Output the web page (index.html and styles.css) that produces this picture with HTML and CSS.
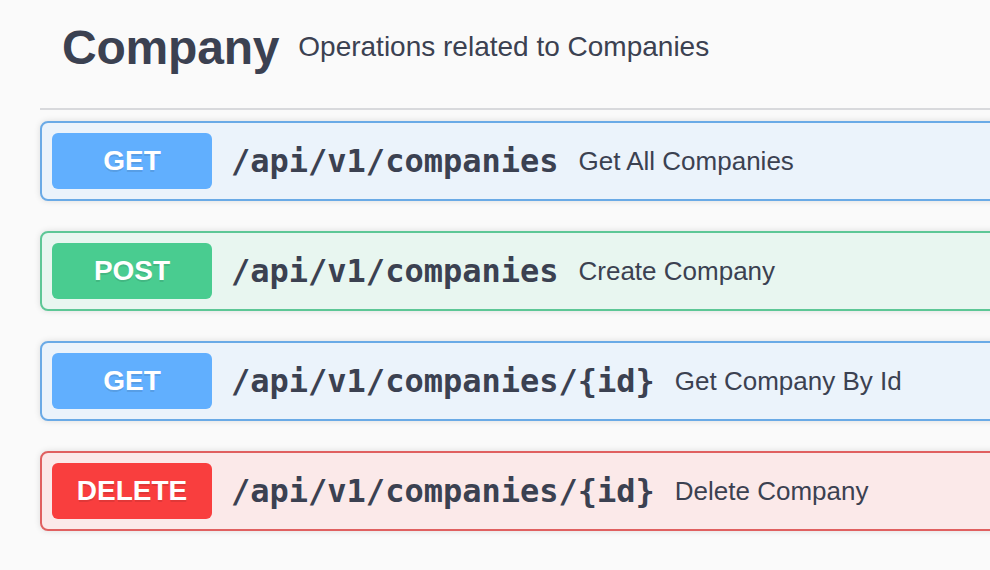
FILE: index.html
```html
<!DOCTYPE html>
<html>
<head>
<meta charset="utf-8">
<link rel="stylesheet" href="styles.css">
</head>
<body>
<div class="section">
  <h3 class="tag">
    <span class="tag-name">Company</span>
    <small class="tag-desc">Operations related to Companies</small>
  </h3>
  <div class="ops">
    <div class="op op-get">
      <span class="method">GET</span>
      <span class="path">/api/v1/companies</span>
      <span class="desc">Get All Companies</span>
    </div>
    <div class="op op-post">
      <span class="method">POST</span>
      <span class="path">/api/v1/companies</span>
      <span class="desc">Create Company</span>
    </div>
    <div class="op op-get">
      <span class="method">GET</span>
      <span class="path">/api/v1/companies/{id}</span>
      <span class="desc">Get Company By Id</span>
    </div>
    <div class="op op-delete">
      <span class="method">DELETE</span>
      <span class="path">/api/v1/companies/{id}</span>
      <span class="desc">Delete Company</span>
    </div>
  </div>
</div>
</body>
</html>
```
FILE: styles.css
```css
html, body {
  margin: 0;
  padding: 0;
  background: #fafafa;
  overflow: hidden;
  height: 100%;
}
body {
  font-family: "Liberation Sans", Arial, sans-serif;
  color: #3b4151;
}
.section {
  width: 1100px;
  padding-left: 40px;
}
.tag {
  display: flex;
  align-items: center;
  margin: 0 0 11px;
  padding: 11px 40px 25px 22px;
  border-bottom: 2px solid #d8d9dc;
  height: 72px;
  box-sizing: content-box;
}
.tag-name {
  font-size: 48px;
  font-weight: 700;
  color: #3b4151;
  letter-spacing: -0.2px;
}
.tag-desc {
  font-size: 28px;
  font-weight: 400;
  padding-left: 19px;
  color: #3b4151;
}
.ops {
  display: flex;
  flex-direction: column;
  gap: 30px;
}
.op {
  display: flex;
  align-items: center;
  padding: 10px;
  border-radius: 8px;
  border: 2px solid;
  box-shadow: 0 0 6px rgba(0,0,0,0.12);
}
.op-get { background: #ebf3fb; border-color: #6aaae6; }
.op-get .method { background: #61affe; }
.op-post { background: #e8f6f0; border-color: #5dc796; }
.op-post .method { background: #49cc90; }
.op-delete { background: #fbe9e9; border-color: #e06060; }
.op-delete .method { background: #f93e3e; }
.method {
  width: 160px;
  height: 56px;
  display: flex;
  align-items: center;
  justify-content: center;
  border-radius: 6px;
  color: #fff;
  font-size: 28px;
  font-weight: 700;
  text-shadow: 0 2px 0 rgba(0,0,0,0.1);
}
.path {
  font-family: "DejaVu Sans Mono", monospace;
  font-weight: 700;
  font-size: 32px;
  padding: 0 20px 0 19px;
  color: #3b4151;
}
.desc {
  font-size: 26px;
  color: #3b4151;
}
```
